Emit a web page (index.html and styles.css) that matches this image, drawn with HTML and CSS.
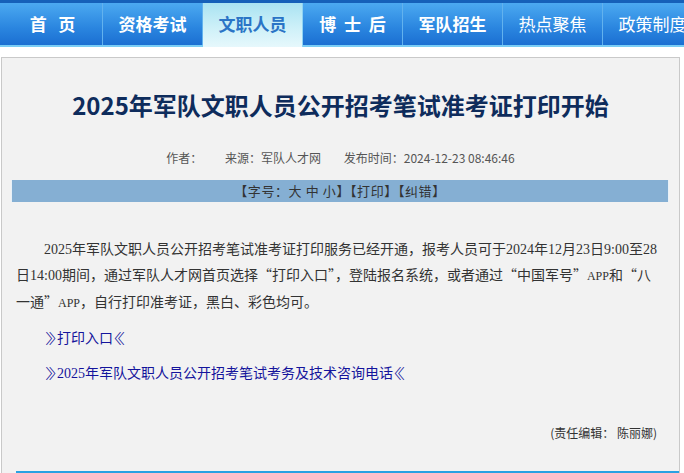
FILE: index.html
```html
<!DOCTYPE html>
<html lang="zh-CN">
<head>
  <meta charset="utf-8">
  <title>2025年军队文职人员公开招考笔试准考证打印开始</title>
  <link rel="stylesheet" href="styles.css">
</head>
<body>
  <div class="nav">
    <ul>
      <li><a href="#">首&nbsp;&nbsp;&nbsp;页</a></li>
      <li><a href="#">资格考试</a></li>
      <li class="on"><a href="#">文职人员</a></li>
      <li><a href="#">博&nbsp;&nbsp;士&nbsp;&nbsp;后</a></li>
      <li><a href="#">军队招生</a></li>
      <li class="thin"><a href="#">热点聚焦</a></li>
      <li class="thin"><a href="#">政策制度</a></li>
    </ul>
  </div>

  <div class="article">
    <h1 class="title">2025年军队文职人员公开招考笔试准考证打印开始</h1>
    <div class="meta">
      <span>作者：</span>
      <span class="gap">来源：军队人才网</span>
      <span class="gap">发布时间：2024-12-23 08:46:46</span>
    </div>
    <div class="tools">【字号：大 中 小】【打印】【纠错】</div>

    <div class="content">
      <p class="para">2025年军队文职人员公开招考笔试准考证打印服务已经开通，报考人员可于2024年12月23日9:00至28日14:00期间，通过军队人才网首页选择<span class="q">“</span>打印入口<span class="q">”</span>，登陆报名系统，或者通过<span class="q">“</span>中国军号<span class="q">”</span><span class="app">APP</span>和<span class="q">“</span>八一通<span class="q">”</span><span class="app">APP</span>，自行打印准考证，黑白、彩色均可。</p>
      <p class="link"><a href="#"><span class="br">》</span>打印入口<span class="br">《</span></a></p>
      <p class="link"><a href="#"><span class="br">》</span>2025年军队文职人员公开招考笔试考务及技术咨询电话<span class="br">《</span></a></p>
    </div>

    <div class="editor">(责任编辑： 陈丽娜)</div>
    <div class="related"></div>
  </div>
</body>
</html>
```

FILE: styles.css
```css
/* page */
body {
  margin: 0;
  background: #fff;
  font-family: "Noto Sans CJK SC", sans-serif;
  color: #333;
  overflow: hidden;
}
a {
  text-decoration: none;
}

/* top navigation */
.nav {
  border-top: 3px solid #1560b9;
  border-bottom: 2px solid #79cdf5;
  background: linear-gradient(#4ba9f1, #2a85df 60%, #1b6fd2);
}
.nav ul {
  display: flex;
  margin: 0;
  padding: 0 0 0 3px;
  list-style: none;
  white-space: nowrap;
}
.nav li {
  flex: none;
  width: 99px;
  border-right: 1px solid #62b2ee;
}
.nav li a {
  display: block;
  height: 42px;
  line-height: 42px;
  text-align: center;
  font-size: 17px;
  font-weight: bold;
  color: #fff;
}
.nav li.thin a {
  font-weight: normal;
}
.nav li.on {
  margin-bottom: -2px;
  border-right-color: #8fd3f3;
  background: linear-gradient(#a9e3f2, #cdf0f8 55%, #e6f8fc);
}
.nav li.on a {
  height: 44px;
  line-height: 42px;
  color: #2a74c6;
}

/* article box */
.article {
  margin: 10px 4px 0 1px;
  border: 1px solid #c9c9c9;
  background: #f2f2f2;
  height: 500px;
}
.title {
  margin: 31px 0 0;
  font-size: 24px;
  line-height: 32px;
  font-weight: bold;
  color: #0e2c5c;
  text-align: center;
}
.meta {
  margin-top: 27px;
  font-size: 12px;
  line-height: 20px;
  color: #555;
  text-align: center;
}
.meta .gap {
  margin-left: 20px;
}
.tools {
  margin: 12px 10px 0 9px;
  height: 22px;
  line-height: 22px;
  background: #85afd3;
  border: 1px solid #e8f1f8;
  border-width: 0 1px;
  font-size: 13px;
  letter-spacing: 0.6px;
  color: #333;
  text-align: center;
}

/* body text */
.content {
  margin-top: 35px;
  padding: 0 18px 0 14px;
  font-family: "Liberation Serif", "Noto Sans CJK SC", serif;
  font-size: 14px;
  line-height: 25px;
  color: #333;
}
.content p {
  margin: 0 0 10px;
}
.para {
  text-indent: 2em;
}
.q {
  font-family: "Noto Sans CJK SC", sans-serif;
  font-feature-settings: "fwid";
}
.app {
  font-size: 12px;
}
.link {
  padding-left: 28px;
}
.link a {
  color: #14149c;
}
.link .br {
  display: inline-block;
  width: 13px;
  text-align: center;
  font-weight: 300;
  font-feature-settings: "halt";
  transform: scaleX(1.6);
}
.editor {
  margin-top: 37px;
  padding-right: 22px;
  text-align: right;
  font-size: 12px;
  line-height: 20px;
  color: #333;
}
.related {
  margin: 28px 0 0 14px;
  border-top: 2px solid #2aa1e2;
}
```
